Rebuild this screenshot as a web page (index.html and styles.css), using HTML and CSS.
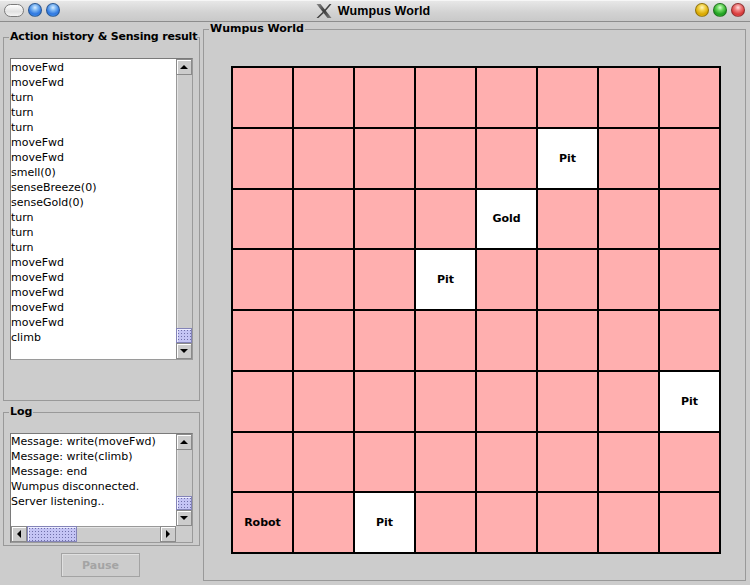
FILE: index.html
```html
<!DOCTYPE html>
<html>
<head>
<meta charset="utf-8">
<title>Wumpus World</title>
<link rel="stylesheet" href="styles.css">
</head>
<body>
<div class="window">
  <header class="titlebar">
    <div class="lights lights-left">
      <span class="pill"></span>
      <span class="dot blue"></span>
      <span class="dot blue"></span>
    </div>
    <div class="title">
      <svg class="xlogo" width="16" height="16" viewBox="0 0 16 16">
        <defs>
          <linearGradient id="xg" x1="0" y1="0" x2="1" y2="1">
            <stop offset="0" stop-color="#8a8a8a"/>
            <stop offset="0.5" stop-color="#3c3c3c"/>
            <stop offset="1" stop-color="#7a7a7a"/>
          </linearGradient>
        </defs>
        <polygon points="0.5,1 4.5,1 15.5,15 11.5,15" fill="url(#xg)"/>
        <polygon points="13.5,1 15.5,1 9.2,8.6 8.2,7.3" fill="url(#xg)"/>
        <polygon points="6.8,8.8 7.8,10.1 2.5,15 0.5,15" fill="url(#xg)"/>
      </svg>
      <span class="title-text">Wumpus World</span>
    </div>
    <div class="lights lights-right">
      <span class="dot yellow"></span>
      <span class="dot green"></span>
      <span class="dot red"></span>
    </div>
  </header>

  <main class="main">
    <div class="sidebar">
      <fieldset class="panel history">
        <legend class="tight">Action history &amp; Sensing result</legend>
        <div class="listbox">
          <ul class="items">
            <li>moveFwd</li>
            <li>moveFwd</li>
            <li>turn</li>
            <li>turn</li>
            <li>turn</li>
            <li>moveFwd</li>
            <li>moveFwd</li>
            <li>smell(0)</li>
            <li>senseBreeze(0)</li>
            <li>senseGold(0)</li>
            <li>turn</li>
            <li>turn</li>
            <li>turn</li>
            <li>moveFwd</li>
            <li>moveFwd</li>
            <li>moveFwd</li>
            <li>moveFwd</li>
            <li>moveFwd</li>
            <li>climb</li>
          </ul>
          <div class="vscroll">
            <span class="sbtn"><i class="arrow up"></i></span>
            <span class="vtrack"><span class="thumb vthumb"></span></span>
            <span class="sbtn"><i class="arrow down"></i></span>
          </div>
        </div>
      </fieldset>

      <fieldset class="panel log">
        <legend>Log</legend>
        <div class="logbox">
          <ul class="items logitems">
            <li>Message: write(moveFwd)</li>
            <li>Message: write(climb)</li>
            <li>Message: end</li>
            <li>Wumpus disconnected.</li>
            <li>Server listening..</li>
          </ul>
          <div class="vscroll">
            <span class="sbtn"><i class="arrow up"></i></span>
            <span class="vtrack"><span class="thumb vthumb log-vthumb"></span></span>
            <span class="sbtn"><i class="arrow down"></i></span>
          </div>
          <div class="hscroll">
            <span class="sbtn hbtn"><i class="arrow left"></i></span>
            <span class="htrack"><span class="thumb hthumb"></span></span>
            <span class="sbtn hbtn"><i class="arrow right"></i></span>
          </div>
          <span class="corner"></span>
        </div>
      </fieldset>

      <button class="pause" disabled>Pause</button>
    </div>

    <fieldset class="panel world">
      <legend>Wumpus World</legend>
      <div class="board">
        <div class="cell"></div><div class="cell"></div><div class="cell"></div><div class="cell"></div><div class="cell"></div><div class="cell"></div><div class="cell"></div><div class="cell"></div>
        <div class="cell"></div><div class="cell"></div><div class="cell"></div><div class="cell"></div><div class="cell"></div><div class="cell white">Pit</div><div class="cell"></div><div class="cell"></div>
        <div class="cell"></div><div class="cell"></div><div class="cell"></div><div class="cell"></div><div class="cell white">Gold</div><div class="cell"></div><div class="cell"></div><div class="cell"></div>
        <div class="cell"></div><div class="cell"></div><div class="cell"></div><div class="cell white">Pit</div><div class="cell"></div><div class="cell"></div><div class="cell"></div><div class="cell"></div>
        <div class="cell"></div><div class="cell"></div><div class="cell"></div><div class="cell"></div><div class="cell"></div><div class="cell"></div><div class="cell"></div><div class="cell"></div>
        <div class="cell"></div><div class="cell"></div><div class="cell"></div><div class="cell"></div><div class="cell"></div><div class="cell"></div><div class="cell"></div><div class="cell white">Pit</div>
        <div class="cell"></div><div class="cell"></div><div class="cell"></div><div class="cell"></div><div class="cell"></div><div class="cell"></div><div class="cell"></div><div class="cell"></div>
        <div class="cell">Robot</div><div class="cell"></div><div class="cell white">Pit</div><div class="cell"></div><div class="cell"></div><div class="cell"></div><div class="cell"></div><div class="cell"></div>
      </div>
    </fieldset>
  </main>
</div>
</body>
</html>
```

FILE: styles.css
```css
* { box-sizing: border-box; }

html, body {
  margin: 0;
  padding: 0;
}

body {
  width: 750px;
  height: 585px;
  overflow: hidden;
  background: #cccccc;
  font-family: "DejaVu Sans", sans-serif;
  font-size: 11px;
  color: #000;
}

.window {
  width: 750px;
  height: 585px;
  display: flex;
  flex-direction: column;
}

/* ---------- title bar ---------- */
.titlebar {
  height: 22px;
  flex: none;
  display: grid;
  grid-template-columns: 1fr auto 1fr;
  align-items: center;
  background: linear-gradient(#e9e9e9, #d2d2d2 60%, #c9c9c9);
  border-bottom: 1px solid #8c8c8c;
  box-shadow: inset 0 1px 0 #f6f6f6;
}

.lights {
  display: flex;
  align-items: center;
  gap: 4px;
  height: 100%;
  padding-bottom: 1px;
}

.lights-left { padding-left: 4px; }
.lights-right { justify-content: flex-end; padding-right: 5px; gap: 4px; }

.pill {
  width: 20px;
  height: 13px;
  border-radius: 7px;
  border: 1px solid #7b7b7b;
  background: linear-gradient(#ffffff, #e2e2e2 60%, #f4f4f4);
}

.dot {
  width: 14px;
  height: 14px;
  border-radius: 50%;
  border: 1px solid rgba(0,0,0,0.35);
}

.dot.blue {
  background: radial-gradient(circle at 50% 30%, #d8ecff 0, #7fb8f4 28%, #2f78e0 62%, #4f9cf0 100%);
}
.dot.yellow {
  background: radial-gradient(circle at 50% 30%, #fff6c0 0, #f2d24a 30%, #d9a800 65%, #f0c020 100%);
}
.dot.green {
  background: radial-gradient(circle at 50% 30%, #d8ffd0 0, #6cd860 30%, #20a020 65%, #40c040 100%);
}
.dot.red {
  background: radial-gradient(circle at 50% 30%, #ffe0e0 0, #f08080 30%, #d83a3a 65%, #f06060 100%);
}

.title {
  display: flex;
  align-items: center;
  gap: 6px;
  margin-left: -4px;
}

.xlogo { display: block; }

.title-text {
  font-family: "Liberation Sans", Arial, sans-serif;
  font-weight: bold;
  font-size: 12.5px;
  letter-spacing: 0.1px;
}

/* ---------- main ---------- */
.main {
  flex: 1;
  display: flex;
  align-items: flex-start;
  gap: 3px;
  padding: 0 4px 0 3px;
}

.sidebar {
  width: 197px;
  flex: none;
  display: flex;
  flex-direction: column;
  margin-top: 8px;
}

.panel {
  margin: 0;
  min-width: 0;
  border: 1px solid #999999;
  padding: 14px 6px 0 5px;
}

.panel legend {
  font-weight: bold;
  font-size: 11px;
  line-height: 14px;
  padding: 0 1px;
  margin: 0;
  white-space: nowrap;
}

.panel legend.tight {
  letter-spacing: -0.2px;
  padding: 0 0 0 1px;
}

.history { padding-bottom: 40px; }

.log {
  margin-top: 4px;
  padding-bottom: 2px;
}

/* ---------- lists ---------- */
.listbox {
  width: 183px;
  height: 302px;
  margin-left: 1px;
  display: flex;
  border: 1px solid #7a7a7a;
  border-right-color: #9a9a9a;
  border-bottom-color: #9a9a9a;
  background: #fff;
}

.items {
  list-style: none;
  margin: 0;
  padding: 1px 0 0 0;
  flex: 1;
  min-width: 0;
  background: #fff;
  overflow: hidden;
}

.items li {
  line-height: 15px;
  font-size: 11px;
  white-space: nowrap;
}

.logitems { padding-top: 0; }

.vscroll {
  width: 16px;
  flex: none;
  display: flex;
  flex-direction: column;
  background: #cccccc;
}

.sbtn {
  width: 16px;
  height: 16px;
  flex: none;
  display: flex;
  align-items: center;
  justify-content: center;
  background: #cccccc;
  border: 1px solid #8a8a8a;
  box-shadow: inset 1px 1px 0 #ffffff;
}

.arrow {
  display: block;
  width: 0;
  height: 0;
}
.arrow.up {
  border-left: 4px solid transparent;
  border-right: 4px solid transparent;
  border-bottom: 4px solid #000;
  margin-top: -1px;
}
.arrow.down {
  border-left: 4px solid transparent;
  border-right: 4px solid transparent;
  border-top: 4px solid #000;
}
.arrow.left {
  border-top: 4px solid transparent;
  border-bottom: 4px solid transparent;
  border-right: 4px solid #000;
}
.arrow.right {
  border-top: 4px solid transparent;
  border-bottom: 4px solid transparent;
  border-left: 4px solid #000;
}

.vtrack {
  flex: 1;
  display: flex;
  flex-direction: column;
  justify-content: flex-end;
  background: #cccccc;
  border-left: 1px solid #999999;
  box-shadow: inset 1px 0 0 #e4e4e4;
}

.thumb {
  display: block;
  background-color: #c4c4f4;
  background-image: radial-gradient(circle, #6f6fa8 0.6px, transparent 0.9px);
  background-size: 3px 3px;
  border: 1px solid #8484b8;
  box-shadow: inset 1px 1px 0 #eeeeff;
}

.vthumb {
  height: 15px;
  margin-left: -1px;
}

.log-vthumb { height: 14px; }

/* ---------- log box ---------- */
.logbox {
  width: 183px;
  height: 110px;
  margin-left: 1px;
  display: grid;
  grid-template-columns: 1fr 16px;
  grid-template-rows: 1fr 16px;
  border: 1px solid #7a7a7a;
  border-right-color: #9a9a9a;
  border-bottom-color: #9a9a9a;
  background: #fff;
}

.hscroll {
  display: flex;
  height: 16px;
  background: #cccccc;
}

.htrack {
  flex: 1;
  display: flex;
  background: #cccccc;
  border-top: 1px solid #999999;
  box-shadow: inset 0 1px 0 #e4e4e4;
}

.hthumb {
  width: 50px;
  margin-top: -1px;
  height: 16px;
}

.corner {
  background: #cccccc;
}

/* ---------- pause button ---------- */
.pause {
  align-self: center;
  margin-top: 7px;
  margin-left: -2px;
  width: 79px;
  height: 24px;
  padding: 0;
  background: #cccccc;
  border: 1px solid #a3a3a3;
  box-shadow: inset 1px 1px 0 #e0e0e0;
  font-family: "DejaVu Sans", sans-serif;
  font-weight: bold;
  font-size: 11px;
  color: #a4a4a4;
}

/* ---------- world ---------- */
.world {
  width: 543px;
  flex: none;
  padding: 30px 0 26px 5px;
}

.board {
  margin-left: 22px;
  width: max-content;
  display: grid;
  grid-template-columns: repeat(8, 59px);
  grid-auto-rows: 58.75px;
  gap: 2px;
  padding: 2px;
  background: #000;
}

.cell {
  background: #ffafaf;
  display: flex;
  align-items: center;
  justify-content: center;
  font-weight: bold;
  font-size: 11px;
}

.cell.white { background: #ffffff; }
```
